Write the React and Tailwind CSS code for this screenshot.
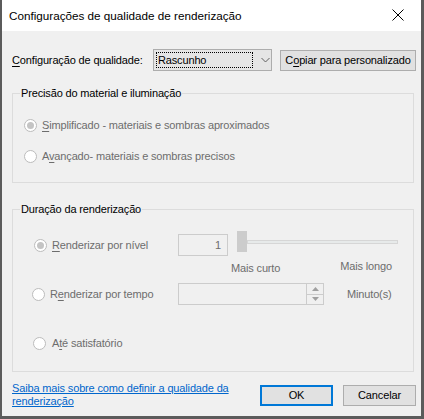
import React from 'react';

const font = { fontFamily: '"Liberation Sans", Arial, sans-serif' };

function Radio({ checked }) {
  return (
    <span className="flex h-[13px] w-[13px] shrink-0 items-center justify-center rounded-full border border-[#bcbcbc] bg-white">
      {checked && <span className="h-[7px] w-[7px] rounded-full bg-[#c4c4c4]" />}
    </span>
  );
}

function Key({ children }) {
  return <span className="underline underline-offset-2">{children}</span>;
}

function Group({ title, className, children }) {
  return (
    <fieldset className={`w-[402px] border border-[#dcdcdc] ${className}`}>
      <legend className="ml-[7px] px-[1px] leading-[16px] text-black">{title}</legend>
      {children}
    </fieldset>
  );
}

export default function App() {
  return (
    <div
      className="flex h-[419px] w-[424px] flex-col overflow-hidden whitespace-nowrap border-b-[3px] border-l-2 border-r-[3px] border-[#5b5b5b] bg-[#f0f0f0] text-[11px] tracking-[-0.15px] text-black"
      style={font}
    >
      {/* title bar */}
      <div className="flex h-[31px] shrink-0 items-center justify-between bg-white pl-[7px] pr-[17px]">
        <span className="text-[11.7px] leading-[16px] tracking-normal">Configurações de qualidade de renderização</span>
        <svg width="12" height="12" viewBox="0 0 12 12" className="mb-[1px]">
          <path d="M0.5 0.5 L11.5 11.5 M11.5 0.5 L0.5 11.5" stroke="#000" strokeWidth="1" />
        </svg>
      </div>

      <div className="flex flex-col pl-[10px]">
        {/* quality row */}
        <div className="mt-[18px] flex h-[22px] items-center">
          <span className="w-[141px]">
            <Key>C</Key>onfiguração de qualidade:
          </span>
          <div className="flex h-[22px] w-[119px] items-center border border-[#adadad] bg-[#e5e5e5] pl-[2px]">
            <div className="flex h-[16px] w-[97px] items-center border border-dotted border-black pl-[1px]">
              Rascunho
            </div>
            <svg width="9" height="6" viewBox="0 0 9 6" className="ml-[8px]">
              <path d="M0.5 1 L4.5 5 L8.5 1" fill="none" stroke="#606060" strokeWidth="1" />
            </svg>
          </div>
          <button className="ml-[8px] flex h-[21px] w-[136px] items-center justify-center border border-[#adadad] bg-[#e1e1e1]">
            <span>
              C<Key>o</Key>piar para personalizado
            </span>
          </button>
        </div>

        {/* material group */}
        <Group title="Precisão do material e iluminação" className="mt-[14px] pb-[18px] text-[#6d6d6d]">
          <div className="mt-[16px] flex h-[16px] items-center gap-[5px] pl-[11px]">
            <Radio checked />
            <span>
              <Key>S</Key>implificado - materiais e sombras aproximados
            </span>
          </div>
          <div className="mt-[15px] flex h-[16px] items-center gap-[5px] pl-[11px]">
            <Radio />
            <span>
              A<Key>v</Key>ançado- materiais e sombras precisos
            </span>
          </div>
        </Group>

        {/* duration group */}
        <Group title="Duração da renderização" className="mt-[18px] pb-[20px] text-[#6d6d6d]">
          <div className="mt-[17px] flex h-[22px] items-center">
            <div className="flex w-[165px] items-center gap-[5px] pl-[21px]">
              <Radio checked />
              <span>
                <Key>R</Key>enderizar por nível
              </span>
            </div>
            <div className="flex h-[22px] w-[50px] items-center justify-end border border-[#cccccc] bg-[#f0f0f0] pr-[6px]">
              1
            </div>
            <div className="relative ml-[9px] h-[22px] w-[161px]">
              <div className="absolute left-[10px] right-0 top-[6px] h-[4px] border border-[#d6d6d6] bg-[#e7eaea]" />
              <div className="absolute left-0 top-[-3px] h-[21px] w-[10px] bg-[#cccccc]" />
            </div>
          </div>
          <div className="mt-[4px] flex h-[16px] items-start pl-[218px] pr-[21px]">
            <span className="leading-[16px]">Mais curto</span>
            <span className="ml-auto -mt-[2px] leading-[16px]">Mais longo</span>
          </div>
          <div className="mt-[7px] flex h-[22px] items-center">
            <div className="flex w-[165px] items-center gap-[5px] pl-[19px]">
              <Radio />
              <span>
                R<Key>e</Key>nderizar por tempo
              </span>
            </div>
            <div className="flex h-[22px] w-[146px] justify-end border border-[#cccccc] bg-[#f0f0f0]">
              <div className="flex w-[17px] flex-col border-l border-[#cccccc]">
                <div className="flex flex-1 items-center justify-center border-b border-[#cccccc]">
                  <svg width="7" height="4" viewBox="0 0 7 4">
                    <path d="M0 4 L3.5 0 L7 4 Z" fill="#a0a0a0" />
                  </svg>
                </div>
                <div className="flex flex-1 items-center justify-center">
                  <svg width="7" height="4" viewBox="0 0 7 4">
                    <path d="M0 0 L3.5 4 L7 0 Z" fill="#a0a0a0" />
                  </svg>
                </div>
              </div>
            </div>
            <span className="ml-[23px]">Minuto(s)</span>
          </div>
          <div className="mt-[30px] flex h-[16px] items-center gap-[6px] pl-[20px]">
            <Radio />
            <span>
              A<Key>t</Key>é satisfatório
            </span>
          </div>
        </Group>

        {/* footer */}
        <div className="mt-[10px] flex w-[404px] items-start justify-between">
          <a href="#" className="text-[#0066cc] underline underline-offset-1 leading-[13px]">
            Saiba mais sobre como definir a qualidade da
            <br />
            renderização
          </a>
          <div className="mt-[3px] flex gap-[10px]">
            <button className="flex h-[21px] w-[73px] items-center justify-center border-2 border-[#0078d7] bg-[#e1e1e1]">
              OK
            </button>
            <button className="flex h-[21px] w-[73px] items-center justify-center border border-[#adadad] bg-[#e1e1e1]">
              Cancelar
            </button>
          </div>
        </div>
      </div>
    </div>
  );
}
